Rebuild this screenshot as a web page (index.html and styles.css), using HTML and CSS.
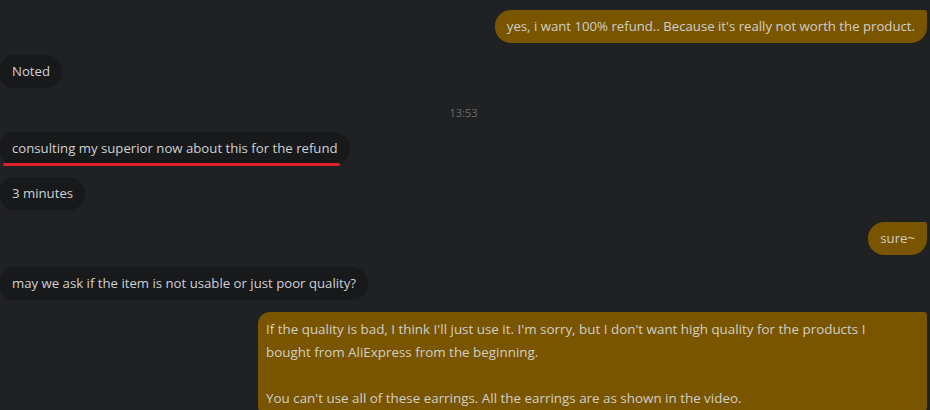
FILE: index.html
```html
<!DOCTYPE html>
<html>
<head>
<meta charset="utf-8">
<link rel="stylesheet" href="styles.css">
</head>
<body>
<div class="chat">
  <div class="row out"><div class="bubble mine">yes, i want 100% refund.. Because it's really not worth the product.</div></div>
  <div class="row in"><div class="bubble theirs">Noted</div></div>
  <div class="time">13:53</div>
  <div class="row in"><div class="bubble theirs marked">consulting my superior now about this for the refund</div></div>
  <div class="row in"><div class="bubble theirs">3 minutes</div></div>
  <div class="row out"><div class="bubble mine">sure~</div></div>
  <div class="row in"><div class="bubble theirs">may we ask if the item is not usable or just poor quality?</div></div>
  <div class="row out"><div class="bubble mine long"><p>If the quality is bad, I think I'll just use it. I'm sorry, but I don't want high quality for the products I bought from AliExpress from the beginning.</p><p class="blank">&nbsp;</p><p>You can't use all of these earrings. All the earrings are as shown in the video.</p></div></div>
</div>
</body>
</html>
```
FILE: styles.css
```css
html, body {
  margin: 0;
  padding: 0;
  background: #1f2123;
  overflow: hidden;
  height: 410px;
}
.chat {
  display: flex;
  flex-direction: column;
  gap: 12px;
  padding: 10px 3px 0 0;
  font-family: "Open Sans", "Noto Sans", sans-serif;
  font-size: 13.2px;
  color: #cfd1d3;
}
.row {
  display: flex;
}
.row.out { justify-content: flex-end; }
.row.in { justify-content: flex-start; }
.bubble {
  height: 33px;
  line-height: 33px;
  padding: 0 12px;
  box-sizing: border-box;
  white-space: nowrap;
}
.mine {
  background: #7a5500;
  border-radius: 16px 3px 16px 16px;
  color: #d0cfc8;
}
.theirs {
  background: #18191b;
  border-radius: 14px 16px 16px 14px;
}
.marked {
  position: relative;
}
.marked::after {
  content: "";
  position: absolute;
  left: 3px;
  right: 10px;
  bottom: -1px;
  height: 3px;
  border-radius: 2px;
  background: #e0202a;
}
.time {
  height: 20px;
  line-height: 26px;
  text-align: center;
  font-size: 11px;
  color: #6a6d70;
}
.long {
  height: auto;
  width: 669px;
  line-height: 23px;
  padding: 6px 8px 8px 8px;
  border-radius: 12px 3px 12px 12px;
  white-space: normal;
  font-family: "Open Sans", sans-serif;
  font-size: 13.4px;
}
.long p {
  margin: 0;
  max-width: 630px;
}
```
